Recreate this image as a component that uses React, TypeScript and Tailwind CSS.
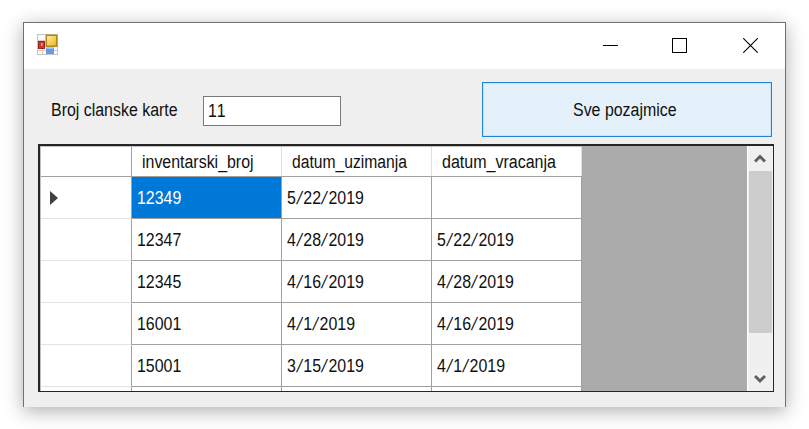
import type { ReactNode } from "react";

const headers = [
  { name: "inventarski_broj", scale: "scale-x-[0.885]" },
  { name: "datum_uzimanja", scale: "scale-x-[0.87]" },
  { name: "datum_vracanja", scale: "scale-x-[0.89]" },
];

const rows = [
  ["12349", "5/22/2019", ""],
  ["12347", "4/28/2019", "5/22/2019"],
  ["12345", "4/16/2019", "4/28/2019"],
  ["16001", "4/1/2019", "4/16/2019"],
  ["15001", "3/15/2019", "4/1/2019"],
];

function Label({ children, scale = "scale-x-[0.885]" }: { children: ReactNode; scale?: string }) {
  return <span className={`inline-block origin-left whitespace-nowrap ${scale}`}>{children}</span>;
}

function DateText({ value }: { value: string }) {
  return (
    <Label>
      {value.split("/").map((part, i) => (
        <span key={i}>
          {i > 0 && <span className="inline-block w-[8.4px] -skew-x-[14deg] text-center">/</span>}
          {part}
        </span>
      ))}
    </Label>
  );
}

function FormIcon() {
  return (
    <svg className="-mt-[3px]" width="21" height="21" viewBox="0 0 21 21">
      <defs>
        <linearGradient id="gold" x1="0" y1="0" x2="1" y2="1">
          <stop offset="0" stopColor="#fff1a0" />
          <stop offset="1" stopColor="#edb514" />
        </linearGradient>
      </defs>
      <rect x="0.5" y="0.5" width="20" height="20" fill="#fafafa" stroke="#c3c6c5" />
      <path d="M1 6.5H8M1 16.5H20M5.5 14V20" stroke="#cfcfcf" fill="none" />
      <rect x="9.3" y="1.3" width="10.4" height="10.9" fill="url(#gold)" stroke="#ad8420" strokeWidth="1.5" />
      <rect x="1.5" y="7.5" width="6" height="7" fill="#c7392f" stroke="#98251f" />
      <rect x="4" y="9" width="1.5" height="3" fill="#efa092" />
      <rect x="9.5" y="14" width="7" height="5.5" fill="#619ce8" stroke="#6f9ad8" />
      <path d="M10 14.5H16" stroke="#98c4ff" />
    </svg>
  );
}

export default function App() {
  return (
    <div className="h-[429px] w-[809px] overflow-hidden bg-white pl-[23px] pt-[22px] font-['Liberation_Sans',Arial,sans-serif] text-[18px] leading-5 text-[#101010] [font-kerning:none]">
      <div className="flex h-[385px] w-[763px] flex-col border border-b-0 border-[#707070] bg-[#efefef] shadow-[0_4px_18px_rgba(0,0,0,0.32)]">
        <header className="flex h-[46px] shrink-0 items-center bg-white pl-[13px]">
          <FormIcon />
          <div className="ml-auto mr-[27px] flex items-center gap-[54px]">
            <svg width="15" height="15" viewBox="0 0 15 15" shapeRendering="crispEdges">
              <path d="M0 6.5H15" stroke="black" />
            </svg>
            <svg className="-mt-px" width="15" height="15" viewBox="0 0 15 15" shapeRendering="crispEdges">
              <rect x="0.5" y="0.5" width="14" height="14" fill="none" stroke="black" />
            </svg>
            <svg className="-mt-px ml-[2px]" width="15" height="15" viewBox="0 0 15 15">
              <path d="M0.3 0.3L14.7 14.7M14.7 0.3L0.3 14.7" stroke="black" strokeWidth="1.1" />
            </svg>
          </div>
        </header>

        <div className="flex h-[75px] shrink-0 items-start">
          <div className="ml-[27px] mt-[31px] w-[152px]">
            <Label>Broj clanske karte</Label>
          </div>
          <div className="mt-[27px] flex h-[30px] w-[138px] items-center border border-[#7a7a7a] bg-white pl-[4px]">
            <Label>11</Label>
          </div>
          <button className="ml-[141px] mt-[13px] flex h-[55px] w-[290px] items-center border border-[#2583d3] bg-[#e4f0fa] pl-[90px] shadow-[inset_0_0_0_1px_#c9e4f8]">
            <Label>Sve pozajmice</Label>
          </button>
        </div>

        <div className="ml-[14px] flex h-[248px] w-[736px] shrink-0 overflow-hidden border-b border-l-2 border-r border-t-2 border-[#262626] bg-[#ababab]">
          <div className="w-[542px] shrink-0 border-l border-t border-[#c0c0c0] bg-white">
            <div className="flex h-[30px] border-b border-[#a0a0a0]">
              <div className="w-[91px] border-r border-[#a0a0a0]" />
              {headers.map(({ name, scale }) => (
                <div key={name} className="flex w-[150px] items-center border-r border-[#e0e0e0] pl-[10px]">
                  <Label scale={scale}>{name}</Label>
                </div>
              ))}
            </div>
            {rows.map((row, r) => (
              <div key={row[0]} className="flex h-[42px]">
                <div className="flex w-[91px] items-center border-b border-r border-b-[#e2e2e2] border-r-[#a0a0a0] pl-[9px]">
                  {r === 0 && (
                    <svg className="mt-px" width="8" height="14" viewBox="0 0 8 14">
                      <path d="M0 0L8 7L0 14Z" fill="#404040" />
                    </svg>
                  )}
                </div>
                {row.map((cell, c) => (
                  <div
                    key={c}
                    className={`flex w-[150px] items-center border-b border-r border-[#a0a0a0] pl-[5px] ${
                      r === 0 && c === 0 ? "bg-[#0078d7] text-white" : ""
                    }`}
                  >
                    {c === 0 ? <Label>{cell}</Label> : <DateText value={cell} />}
                  </div>
                ))}
              </div>
            ))}
            <div className="flex h-[6px]">
              <div className="w-[91px] border-r border-[#a0a0a0]" />
              <div className="w-[150px] border-r border-[#a0a0a0]" />
              <div className="w-[150px] border-r border-[#a0a0a0]" />
              <div className="w-[150px] border-r border-[#a0a0a0]" />
            </div>
          </div>
          <div className="ml-auto flex w-[26px] flex-col items-center border-l border-white bg-[#f0f0f0] pr-px">
            <svg className="my-[8px] h-[9px] shrink-0" width="12" height="9" viewBox="0 0 12 9">
              <path d="M1 7.5L6 2.5L11 7.5" fill="none" stroke="#606060" strokeWidth="3" />
            </svg>
            <div className="h-[162px] w-[23px] bg-[#cdcdcd]" />
            <svg className="mb-[7px] mt-auto shrink-0" width="12" height="10" viewBox="0 0 12 10">
              <path d="M1 2L6 7L11 2" fill="none" stroke="#606060" strokeWidth="3" />
            </svg>
          </div>
        </div>
      </div>
    </div>
  );
}
